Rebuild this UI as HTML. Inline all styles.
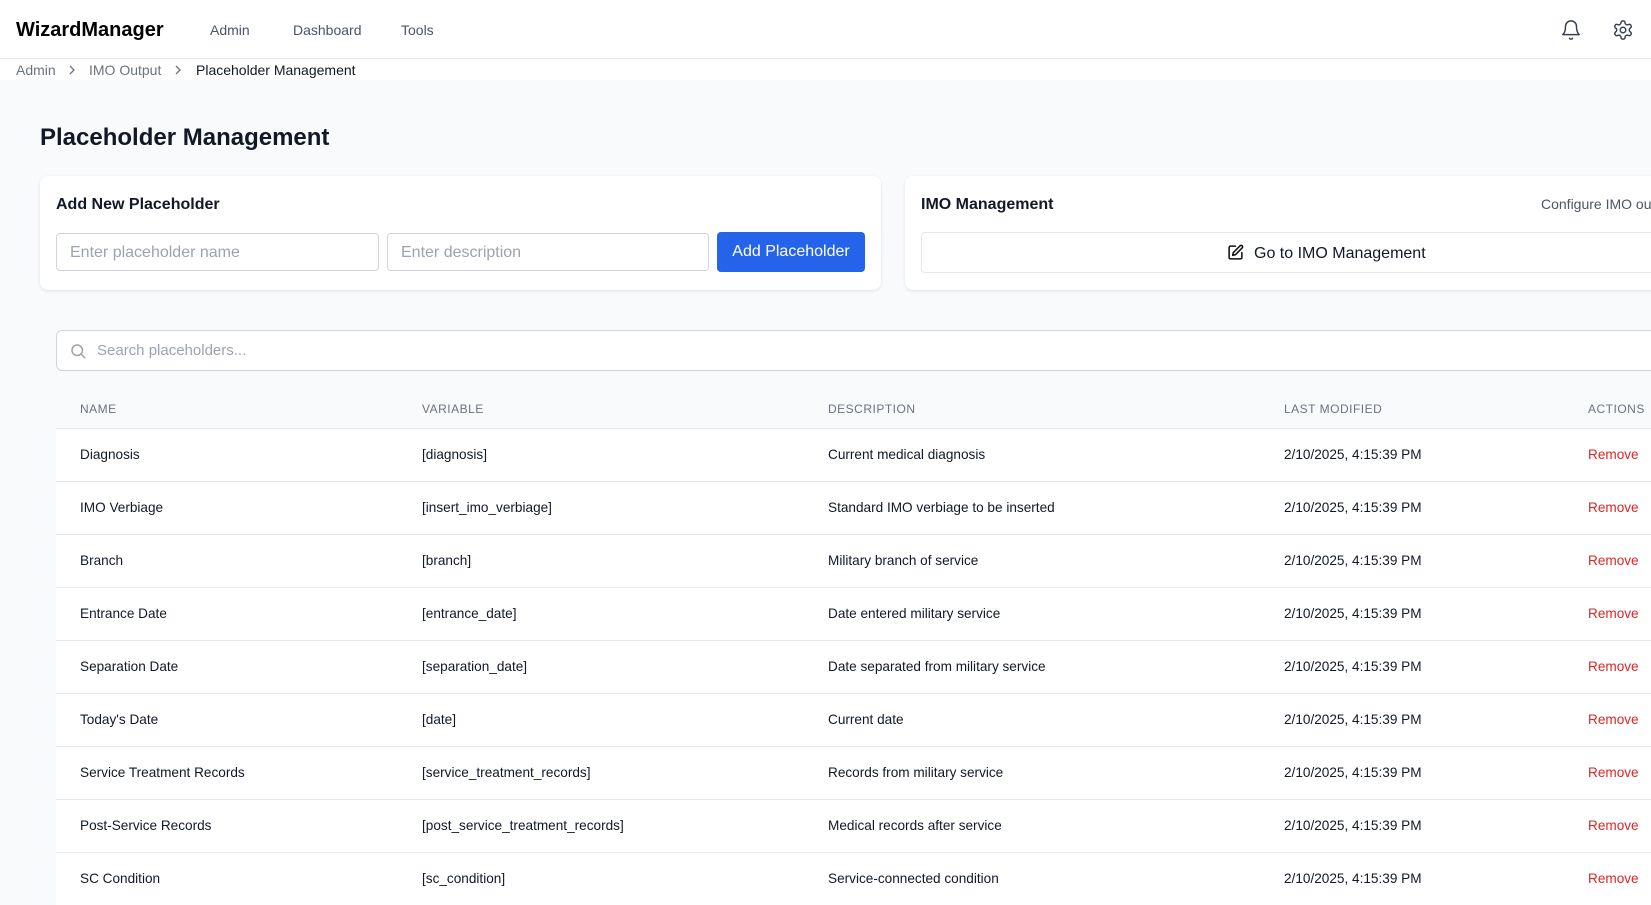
<!DOCTYPE html>
<html><head><meta charset="utf-8"><style>
*{box-sizing:border-box;margin:0;padding:0}
body{width:1651px;height:896px;overflow:hidden;background:#f9fafb;font-family:"Liberation Sans",sans-serif;color:#111827;position:relative}
.hdr{position:absolute;left:0;top:0;width:1651px;height:59px;background:#fff;border-bottom:1px solid #e5e7eb}
.logo{position:absolute;left:16px;top:19px;font-size:20px;font-weight:bold;color:#000}
.nav{position:absolute;top:22px;font-size:14px;color:#4b5563}
.bc{position:absolute;left:0;top:59px;width:1651px;height:21px;background:#fff;font-size:14px;color:#6b7280}
.bc span{position:absolute;top:3px}
.bc svg{position:absolute;top:5px}
h1{position:absolute;left:40px;top:124px;font-size:24px;font-weight:bold;color:#111827}
.card{position:absolute;background:#fff;border-radius:8px;box-shadow:0 1px 3px rgba(0,0,0,.1)}
.ct{position:absolute;font-size:16px;font-weight:bold}
.inp{position:absolute;border:1px solid #d1d5db;border-radius:4px;background:#fff;font-size:16px;color:#9ca3af;padding:10px 13px}
.btn{position:absolute;background:#2563eb;color:#fff;border-radius:4px;font-size:16px;text-align:center;line-height:40px}
.search{position:absolute;left:56px;top:330px;width:1620px;height:41px;border:1px solid #d1d5db;border-radius:6px;background:#fff}
.th{position:absolute;top:402px;font-size:12px;color:#6b7280;letter-spacing:.5px}
.row{position:absolute;left:56px;width:1620px;height:53px;background:#fff;border-top:1px solid #e5e7eb;font-size:13.6px}
.row span{position:absolute;top:18px}
.rm{color:#dc2626}
</style></head><body>
<div class="hdr">
<div class="logo">WizardManager</div>
<div class="nav" style="left:210px">Admin</div>
<div class="nav" style="left:293px">Dashboard</div>
<div class="nav" style="left:401px">Tools</div>
<svg style="position:absolute;left:1560px;top:19px" width="22" height="22" viewBox="0 0 24 24" fill="none" stroke="#374151" stroke-width="1.6" stroke-linecap="round" stroke-linejoin="round"><path d="M6 8a6 6 0 0 1 12 0c0 7 3 9 3 9H3s3-2 3-9"/><path d="M10.3 21a1.94 1.94 0 0 0 3.4 0"/></svg>
<svg style="position:absolute;left:1612px;top:19px" width="22" height="22" viewBox="0 0 24 24" fill="none" stroke="#374151" stroke-width="1.6" stroke-linecap="round" stroke-linejoin="round"><path d="M12.22 2h-.44a2 2 0 0 0-2 2v.18a2 2 0 0 1-1 1.73l-.43.25a2 2 0 0 1-2 0l-.15-.08a2 2 0 0 0-2.73.73l-.22.38a2 2 0 0 0 .73 2.73l.15.1a2 2 0 0 1 1 1.72v.51a2 2 0 0 1-1 1.740l-.15.09a2 2 0 0 0-.73 2.73l.22.38a2 2 0 0 0 2.73.73l.15-.08a2 2 0 0 1 2 0l.43.25a2 2 0 0 1 1 1.73V20a2 2 0 0 0 2 2h.44a2 2 0 0 0 2-2v-.18a2 2 0 0 1 1-1.73l.43-.25a2 2 0 0 1 2 0l.15.08a2 2 0 0 0 2.73-.73l.22-.39a2 2 0 0 0-.73-2.73l-.15-.08a2 2 0 0 1-1-1.74v-.5a2 2 0 0 1 1-1.74l.15-.09a2 2 0 0 0 .73-2.73l-.22-.38a2 2 0 0 0-2.73-.73l-.15.08a2 2 0 0 1-2 0l-.43-.25a2 2 0 0 1-1-1.73V4a2 2 0 0 0-2-2z"/><circle cx="12" cy="12" r="3"/></svg>
</div>
<div class="bc"><span style="left:16px">Admin</span>
<svg style="left:66px" width="12" height="12" viewBox="0 0 12 12" fill="none" stroke="#6b7280" stroke-width="1.3"><path d="M4 2l4 4-4 4"/></svg>
<span style="left:89px">IMO Output</span>
<svg style="left:172px" width="12" height="12" viewBox="0 0 12 12" fill="none" stroke="#6b7280" stroke-width="1.3"><path d="M4 2l4 4-4 4"/></svg>
<span style="left:196px;color:#111827">Placeholder Management</span></div>
<h1>Placeholder Management</h1>
<div class="card" style="left:40px;top:176px;width:841px;height:114px">
<div class="ct" style="left:16px;top:20px">Add New Placeholder</div>
<div class="inp" style="left:16px;top:57px;width:323px;height:38px">Enter placeholder name</div>
<div class="inp" style="left:347px;top:57px;width:322px;height:38px">Enter description</div>
<div class="btn" style="left:677px;top:56px;width:148px;height:40px">Add Placeholder</div>
</div>
<div class="card" style="left:905px;top:176px;width:800px;height:114px">
<div class="ct" style="left:16px;top:20px">IMO Management</div>
<div style="position:absolute;left:636px;top:20px;font-size:14px;color:#4b5563">Configure IMO output</div>
<div style="position:absolute;left:16px;top:56px;width:800px;height:41px;border:1px solid #e5e7eb;border-radius:4px;font-size:16px">
<svg style="position:absolute;left:305px;top:11px" width="17" height="17" viewBox="0 0 24 24" fill="none" stroke="#111" stroke-width="2.2" stroke-linecap="round" stroke-linejoin="round"><path d="M12 3H5a2 2 0 0 0-2 2v14a2 2 0 0 0 2 2h14a2 2 0 0 0 2-2v-7"/><path d="M18.4 2.6a2.1 2.1 0 0 1 3 3L12 15l-4 1 1-4z"/></svg>
<span style="position:absolute;left:332px;top:12px">Go to IMO Management</span></div>
</div>
<div class="search">
<svg style="position:absolute;left:12px;top:11px" width="18" height="18" viewBox="0 0 24 24" fill="none" stroke="#9ca3af" stroke-width="2" stroke-linecap="round"><circle cx="11" cy="11" r="7"/><path d="M21 21l-4.3-4.3"/></svg>
<span style="position:absolute;left:40px;top:11px;font-size:15px;color:#9ca3af">Search placeholders...</span></div>
<div class="th" style="left:80px">NAME</div>
<div class="th" style="left:422px">VARIABLE</div>
<div class="th" style="left:828px">DESCRIPTION</div>
<div class="th" style="left:1284px">LAST MODIFIED</div>
<div class="th" style="left:1588px">ACTIONS</div>
<div class="row" style="top:428px"><span style="left:24px">Diagnosis</span><span style="left:366px">[diagnosis]</span><span style="left:772px">Current medical diagnosis</span><span style="left:1228px">2/10/2025, 4:15:39 PM</span><span class="rm" style="left:1532px">Remove</span></div>
<div class="row" style="top:481px"><span style="left:24px">IMO Verbiage</span><span style="left:366px">[insert_imo_verbiage]</span><span style="left:772px">Standard IMO verbiage to be inserted</span><span style="left:1228px">2/10/2025, 4:15:39 PM</span><span class="rm" style="left:1532px">Remove</span></div>
<div class="row" style="top:534px"><span style="left:24px">Branch</span><span style="left:366px">[branch]</span><span style="left:772px">Military branch of service</span><span style="left:1228px">2/10/2025, 4:15:39 PM</span><span class="rm" style="left:1532px">Remove</span></div>
<div class="row" style="top:587px"><span style="left:24px">Entrance Date</span><span style="left:366px">[entrance_date]</span><span style="left:772px">Date entered military service</span><span style="left:1228px">2/10/2025, 4:15:39 PM</span><span class="rm" style="left:1532px">Remove</span></div>
<div class="row" style="top:640px"><span style="left:24px">Separation Date</span><span style="left:366px">[separation_date]</span><span style="left:772px">Date separated from military service</span><span style="left:1228px">2/10/2025, 4:15:39 PM</span><span class="rm" style="left:1532px">Remove</span></div>
<div class="row" style="top:693px"><span style="left:24px">Today's Date</span><span style="left:366px">[date]</span><span style="left:772px">Current date</span><span style="left:1228px">2/10/2025, 4:15:39 PM</span><span class="rm" style="left:1532px">Remove</span></div>
<div class="row" style="top:746px"><span style="left:24px">Service Treatment Records</span><span style="left:366px">[service_treatment_records]</span><span style="left:772px">Records from military service</span><span style="left:1228px">2/10/2025, 4:15:39 PM</span><span class="rm" style="left:1532px">Remove</span></div>
<div class="row" style="top:799px"><span style="left:24px">Post-Service Records</span><span style="left:366px">[post_service_treatment_records]</span><span style="left:772px">Medical records after service</span><span style="left:1228px">2/10/2025, 4:15:39 PM</span><span class="rm" style="left:1532px">Remove</span></div>
<div class="row" style="top:852px"><span style="left:24px">SC Condition</span><span style="left:366px">[sc_condition]</span><span style="left:772px">Service-connected condition</span><span style="left:1228px">2/10/2025, 4:15:39 PM</span><span class="rm" style="left:1532px">Remove</span></div>
</body></html>
